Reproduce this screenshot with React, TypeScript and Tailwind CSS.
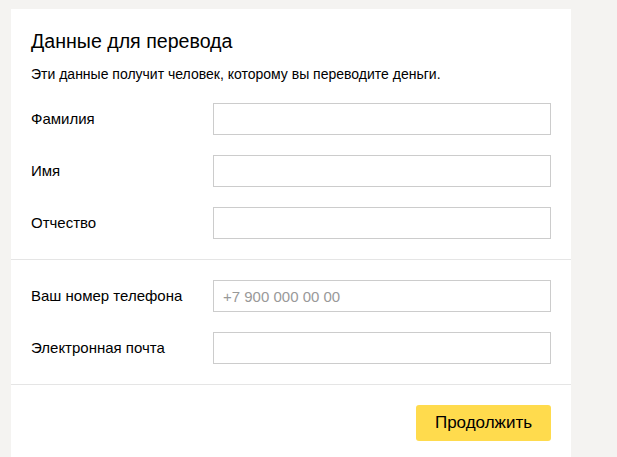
import React from 'react';

const nameFields = ['Фамилия', 'Имя', 'Отчество'];

function Field({ label, placeholder }: { label: string; placeholder?: string }) {
  return (
    <div className="flex items-center">
      <label className="w-[182px] shrink-0 text-[15px] text-black">{label}</label>
      <input
        type="text"
        placeholder={placeholder}
        className="h-8 w-[338px] border border-[#cccccc] bg-white px-[9px] text-[15px] text-black outline-none placeholder:text-[#999999]"
      />
    </div>
  );
}

export default function App() {
  return (
    <div
      className="min-h-screen bg-[#f4f3f1] pl-[11px] pt-[9px]"
      style={{ fontFamily: '"Liberation Sans", Arial, sans-serif' }}
    >
      <div className="min-h-[448px] w-[560px] bg-white">
        <div className="px-5 pt-5 pb-5">
          <h1 className="text-[19.6px] leading-6 text-black">Данные для перевода</h1>
          <p className="mt-3 text-[14px] leading-[18px] text-black">
            Эти данные получит человек, которому вы переводите деньги.
          </p>
          <div className="mt-5 flex flex-col gap-5">
            {nameFields.map((f) => (
              <Field key={f} label={f} />
            ))}
          </div>
        </div>

        <div className="border-t border-[#e5e5e5] px-5 py-5">
          <div className="flex flex-col gap-5">
            <Field label="Ваш номер телефона" placeholder="+7 900 000 00 00" />
            <Field label="Электронная почта" />
          </div>
        </div>

        <div className="flex justify-end border-t border-[#e5e5e5] px-5 pt-5">
          <button className="h-9 w-[135px] rounded-[3px] bg-[#ffdb4d] text-[17px] text-black">
            Продолжить
          </button>
        </div>
      </div>
    </div>
  );
}
